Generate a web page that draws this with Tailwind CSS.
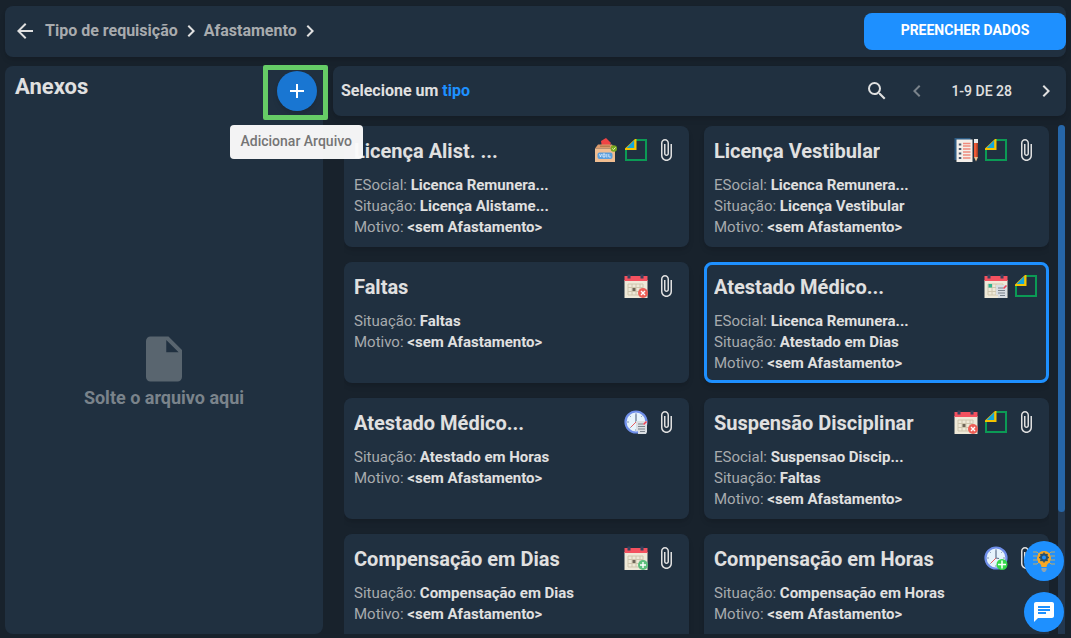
<!DOCTYPE html>
<html lang="pt-BR">
<head>
<meta charset="utf-8">
<meta name="viewport" content="width=device-width, initial-scale=1">
<title>Tipo de requisição - Afastamento</title>
<script src="https://cdn.jsdelivr.net/npm/@tailwindcss/browser@4"></script>
</head>
<body class="relative flex h-screen flex-col gap-[9px] overflow-hidden bg-[#18222c] px-[5px] pt-1.5 pb-1 font-[Roboto,sans-serif] text-[#e0e0e0]">

<svg class="hidden" aria-hidden="true">
  <symbol id="clip" viewBox="0 0 24 24"><path fill="#e0e0e0" d="M16.500 6v11.500c0 2.210-1.790 4-4 4s-4-1.790-4-4V5c0-1.380 1.120-2.500 2.500-2.500s2.500 1.120 2.500 2.500v10.500c0 .55-.45 1-1 1s-1-.45-1-1V6H10v9.500c0 1.380 1.120 2.500 2.500 2.500s2.500-1.120 2.500-2.500V5c0-2.210-1.790-4-4-4S7 2.790 7 5v12.500c0 3.040 2.460 5.500 5.500 5.500s5.500-2.460 5.500-5.500V6z"/></symbol>
  <symbol id="esocial" viewBox="0 0 24 24"><path fill="none" stroke="#0b9a55" stroke-width="2" d="M12 2h10v20H2V12"/><path fill="#f5c400" d="M11 1h1.500v11H1v-1.500z"/><path fill="#12a5dc" d="M10.200 2.200v7.800H2.600z"/></symbol>
  <symbol id="calendar" viewBox="0 0 24 24"><path fill="#efe9d8" d="M.5 6h23v18H.5z"/><path fill="#f4515f" d="M.5 2h23v5H.5z"/><path fill="#37415c" d="M3.500.6h3v3.800h-3zM16.500.6h3v3.800h-3z"/></symbol>
  <symbol id="calendar-grid" viewBox="0 0 24 24"><use href="#calendar"/><path fill="none" stroke="#cfc6ae" d="M4 10h15v11H4zM4 13.500h15M4 17.500h15M8 10v11M12 10v11M16 10v11"/><path fill="#6e6557" d="M8.500 14h3v3h-3z"/></symbol>
  <symbol id="calendar-x" viewBox="0 0 24 24"><use href="#calendar-grid"/><circle cx="19" cy="19" r="5" fill="#ee5f57"/><path stroke="#fff" stroke-width="1.400" d="m17 17 4 4m0-4-4 4"/></symbol>
  <symbol id="calendar-plus" viewBox="0 0 24 24"><use href="#calendar-grid"/><circle cx="19" cy="19" r="5" fill="#5cbf7d"/><path stroke="#fff" stroke-width="1.400" d="M19 16v6m-3-3h6"/></symbol>
  <symbol id="note" viewBox="0 0 24 24"><path fill="#d9dde2" d="M12 11h11v11l-1 2H14v-3h-2z"/><path stroke="#7a828c" d="M14 14h5M14 16.500h7M14 19h7M16 21.500h5"/><path stroke="#ef4056" stroke-width="1.600" d="m19.500 14.500 3-3"/></symbol>
  <symbol id="calendar-note" viewBox="0 0 24 24"><use href="#calendar"/><path fill="none" stroke="#cfc6ae" d="M4 10h15v11H4zM4 13.500h15M4 17.500h15M8 10v11M12 10v11"/><path fill="#2db38e" d="M4.500 10h3.500v3.500H4.500z"/><use href="#note"/></symbol>
  <symbol id="clock" viewBox="0 0 24 24"><circle cx="12" cy="12" r="10.500" fill="#e6f3fc" stroke="#6f8fea" stroke-width="2.200"/><path stroke="#8297b4" d="M12 3v2M12 19v2M3 12h2M19 12h2M5.600 5.600l1.200 1.200M17.200 6.800l1.200-1.200M5.600 18.400l1.200-1.200"/><path fill="none" stroke="#5c6f8a" stroke-width="1.200" d="M12 4.500V12l3 .5"/><path stroke="#e85c5c" d="m12 12-5 5"/></symbol>
  <symbol id="clock-note" viewBox="0 0 24 24"><use href="#clock"/><use href="#note"/></symbol>
  <symbol id="clock-plus" viewBox="0 0 24 24"><use href="#clock"/><circle cx="18" cy="18.500" r="5.500" fill="#35d84b"/><path stroke="#fff" stroke-width="1.500" d="M18 14.500v8m-4-4h8"/></symbol>
  <symbol id="ballot" viewBox="0 0 24 24"><path fill="#ef4444" d="m7 3 5-3 5 5-3 5H8z"/><path fill="#d99a6c" d="m4 6.500-3 4h20l-3-4z"/><path fill="#b97a4f" d="M6 7.500h10v1.500H6z"/><path fill="#f0bd90" d="M1 10.500h20V24H1z"/><rect x="3.500" y="14.500" width="15" height="6.500" rx="2" fill="#5b9fdc"/><path fill="none" stroke="#e6f3ff" stroke-width=".8" d="m5.500 16 1 3 1-3M9 16v3h2v-3H9M12.800 19.500V16M14.800 16v3h2"/><circle cx="19.800" cy="10.500" r="3.200" fill="#79a91f"/><path fill="none" stroke="#e8f5c8" d="m18.300 10.500 1.200 1.200 2-2.300"/></symbol>
  <symbol id="exam" viewBox="0 0 24 24"><path fill="#2c5b84" d="M.5 0h16v22H.5z"/><path fill="#f3eee9" d="M2.500 1.500h16V24h-16z"/><path stroke="#48566c" stroke-width="2" d="M4.800 6.500h2.500M4.800 11h2.500M4.800 15.500h2.500M4.800 20h2.500"/><path stroke="#f08a7c" stroke-width="1.600" d="M9 5.500h7.500M9 8h7.500M9 11h7.500M9 14h7.500M9 17h7.500M9 20h7.500"/><path fill="#e6e8e9" d="M20 1h4v4h-4z"/><path fill="#ef5a35" d="M20 5h4v14h-4z"/><path fill="#a93f29" d="M22.500 5H24v14h-1.500z"/><path fill="#f0c391" d="M20 19h4l-2 4.500z"/></symbol>
</svg>

<header class="flex h-[51px] shrink-0 items-center justify-between rounded-lg bg-[#203040] pl-2 shadow-md">
  <nav aria-label="Navegação" class="flex items-center gap-px pb-0.5 text-base font-bold text-[#a8abae]">
    <button type="button" aria-label="Voltar" class="mr-[7px]"><svg class="size-6" viewBox="0 0 24 24" fill="#e0e0e0"><path d="M20 11H7.830l5.590-5.590L12 4l-8 8 8 8 1.410-1.410L7.830 13H20z"/></svg></button>
    <a href="#tipos">Tipo de requisição</a>
    <svg class="size-6" viewBox="0 0 24 24" fill="#e0e0e0" aria-hidden="true"><path d="M10 6 8.590 7.410 13.170 12l-4.580 4.590L10 18l6-6z"/></svg>
    <a href="#afastamento">Afastamento</a>
    <svg class="size-6" viewBox="0 0 24 24" fill="#e0e0e0" aria-hidden="true"><path d="M10 6 8.590 7.410 13.170 12l-4.580 4.590L10 18l6-6z"/></svg>
  </nav>
  <button type="button" class="h-[37px] w-[202px] rounded-lg bg-[#1e90ff] pb-1 text-sm font-bold text-white">PREENCHER DADOS</button>
</header>

<main class="flex min-h-0 flex-1 gap-2.5">
  <aside class="relative flex w-[318px] shrink-0 flex-col rounded-lg bg-[#203040]">
    <div class="flex items-start justify-between pt-[5px] pr-1.5 pl-2.5">
      <h1 class="text-[22px] leading-8 font-bold">Anexos</h1>
      <button type="button" aria-label="Adicionar Arquivo" aria-describedby="tip" class="grid size-10 place-items-center rounded-full bg-[#1976d2] shadow-md"><svg class="size-6" viewBox="0 0 24 24" fill="#fff"><path d="M19 13h-6v6h-2v-6H5v-2h6V5h2v6h6z"/></svg></button>
    </div>
    <div class="pointer-events-none absolute -top-px -right-[5px] z-10 h-[55px] w-[65px] rounded-xs border-[5px] border-[#66cc66]"></div>
    <div id="tip" role="tooltip" class="absolute top-[59px] -right-10 z-10 rounded-sm bg-[#fafafa]/97 px-[11px] pt-1.5 pb-2 text-sm font-medium whitespace-nowrap text-[#757575]">Adicionar Arquivo</div>
    <div class="flex flex-1 flex-col items-center justify-center pb-1">
      <svg class="size-[54px]" viewBox="0 0 24 24" fill="#59656f" aria-hidden="true"><path d="M6 2c-1.100 0-2 .9-2 2v16c0 1.100.9 2 2 2h12c1.100 0 2-.9 2-2V8l-6-6zm7 7V3.500L18.500 9z"/></svg>
      <p class="text-lg leading-6 font-bold text-[#7a838b]">Solte o arquivo aqui</p>
    </div>
  </aside>

  <section class="flex min-w-0 flex-1 flex-col gap-[9px]">
    <div class="flex h-[50px] shrink-0 items-center justify-between rounded-lg bg-[#203040] px-2 shadow-md">
      <h2 class="text-base font-bold">Selecione um <span class="text-[#1e90ff]">tipo</span></h2>
      <div class="flex items-center">
        <button type="button" aria-label="Pesquisar" class="mr-4"><svg class="size-6" viewBox="0 0 24 24" fill="#e0e0e0"><path d="M15.500 14h-.79l-.28-.27A6.471 6.471 0 0 0 16 9.500 6.500 6.500 0 1 0 9.500 16c1.610 0 3.090-.59 4.230-1.570l.27.28v.79l5 4.990L20.490 19zm-6 0C7.010 14 5 11.990 5 9.500S7.010 5 9.500 5 14 7.010 14 9.500 11.990 14 9.500 14z"/></svg></button>
        <button type="button" aria-label="Página anterior" disabled class="mr-[22px]"><svg class="size-6" viewBox="0 0 24 24" fill="#7a838b"><path d="M15.410 7.410 14 6l-6 6 6 6 1.410-1.410L10.830 12z"/></svg></button>
        <span class="text-sm font-medium">1-9 DE 28</span>
        <button type="button" aria-label="Próxima página" class="ml-[22px]"><svg class="size-6" viewBox="0 0 24 24" fill="#e0e0e0"><path d="M10 6 8.590 7.410 13.170 12l-4.580 4.590L10 18l6-6z"/></svg></button>
      </div>
    </div>

    <div class="flex min-h-0 flex-1 gap-[9px] pr-px pl-[11px]">
      <div class="grid min-w-0 flex-1 auto-rows-[121px] grid-cols-2 gap-[15px] overflow-hidden pt-px text-[15px] leading-[21px] text-[#a8abae]">

        <button type="button" class="flex flex-col rounded-lg bg-[#203040] pt-3 pr-[11px] pl-2.5 text-left shadow-md">
          <span class="mb-[13px] flex h-6 w-full items-center gap-1.5"><strong class="mr-auto truncate pt-0.5 text-xl text-[#e0e0e0]">Licença Alist. ...</strong><svg class="size-6 shrink-0"><use href="#ballot"/></svg><svg class="size-6 shrink-0"><use href="#esocial"/></svg><svg class="size-6 shrink-0"><use href="#clip"/></svg></span>
          <span class="block">ESocial: <strong class="text-[#e0e0e0]">Licenca Remunera...</strong></span>
          <span class="block">Situação: <strong class="text-[#e0e0e0]">Licença Alistame...</strong></span>
          <span class="block">Motivo: <strong class="text-[#e0e0e0]">&lt;sem Afastamento&gt;</strong></span>
        </button>

        <button type="button" class="flex flex-col rounded-lg bg-[#203040] pt-3 pr-[11px] pl-2.5 text-left shadow-md">
          <span class="mb-[13px] flex h-6 w-full items-center gap-1.5"><strong class="mr-auto truncate pt-0.5 text-xl text-[#e0e0e0]">Licença Vestibular</strong><svg class="size-6 shrink-0"><use href="#exam"/></svg><svg class="size-6 shrink-0"><use href="#esocial"/></svg><svg class="size-6 shrink-0"><use href="#clip"/></svg></span>
          <span class="block">ESocial: <strong class="text-[#e0e0e0]">Licenca Remunera...</strong></span>
          <span class="block">Situação: <strong class="text-[#e0e0e0]">Licença Vestibular</strong></span>
          <span class="block">Motivo: <strong class="text-[#e0e0e0]">&lt;sem Afastamento&gt;</strong></span>
        </button>

        <button type="button" class="flex flex-col rounded-lg bg-[#203040] pt-3 pr-[11px] pl-2.5 text-left shadow-md">
          <span class="mb-[13px] flex h-6 w-full items-center gap-1.5"><strong class="mr-auto truncate pt-0.5 text-xl text-[#e0e0e0]">Faltas</strong><svg class="size-6 shrink-0"><use href="#calendar-x"/></svg><svg class="size-6 shrink-0"><use href="#clip"/></svg></span>
          <span class="block">Situação: <strong class="text-[#e0e0e0]">Faltas</strong></span>
          <span class="block">Motivo: <strong class="text-[#e0e0e0]">&lt;sem Afastamento&gt;</strong></span>
        </button>

        <button type="button" aria-pressed="true" class="flex flex-col rounded-lg bg-[#203040] pt-3 pr-[11px] pl-2.5 text-left shadow-md outline-3 -outline-offset-3 outline-[#1e90ff]">
          <span class="mb-[13px] flex h-6 w-full items-center gap-1.5"><strong class="mr-auto truncate pt-0.5 text-xl text-[#e0e0e0]">Atestado Médico...</strong><svg class="size-6 shrink-0"><use href="#calendar-note"/></svg><svg class="size-6 shrink-0"><use href="#esocial"/></svg></span>
          <span class="block">ESocial: <strong class="text-[#e0e0e0]">Licenca Remunera...</strong></span>
          <span class="block">Situação: <strong class="text-[#e0e0e0]">Atestado em Dias</strong></span>
          <span class="block">Motivo: <strong class="text-[#e0e0e0]">&lt;sem Afastamento&gt;</strong></span>
        </button>

        <button type="button" class="flex flex-col rounded-lg bg-[#203040] pt-3 pr-[11px] pl-2.5 text-left shadow-md">
          <span class="mb-[13px] flex h-6 w-full items-center gap-1.5"><strong class="mr-auto truncate pt-0.5 text-xl text-[#e0e0e0]">Atestado Médico...</strong><svg class="size-6 shrink-0"><use href="#clock-note"/></svg><svg class="size-6 shrink-0"><use href="#clip"/></svg></span>
          <span class="block">Situação: <strong class="text-[#e0e0e0]">Atestado em Horas</strong></span>
          <span class="block">Motivo: <strong class="text-[#e0e0e0]">&lt;sem Afastamento&gt;</strong></span>
        </button>

        <button type="button" class="flex flex-col rounded-lg bg-[#203040] pt-3 pr-[11px] pl-2.5 text-left shadow-md">
          <span class="mb-[13px] flex h-6 w-full items-center gap-1.5"><strong class="mr-auto truncate pt-0.5 text-xl text-[#e0e0e0]">Suspensão Disciplinar</strong><svg class="size-6 shrink-0"><use href="#calendar-x"/></svg><svg class="size-6 shrink-0"><use href="#esocial"/></svg><svg class="size-6 shrink-0"><use href="#clip"/></svg></span>
          <span class="block">ESocial: <strong class="text-[#e0e0e0]">Suspensao Discip...</strong></span>
          <span class="block">Situação: <strong class="text-[#e0e0e0]">Faltas</strong></span>
          <span class="block">Motivo: <strong class="text-[#e0e0e0]">&lt;sem Afastamento&gt;</strong></span>
        </button>

        <button type="button" class="flex flex-col rounded-lg bg-[#203040] pt-3 pr-[11px] pl-2.5 text-left shadow-md">
          <span class="mb-[13px] flex h-6 w-full items-center gap-1.5"><strong class="mr-auto truncate pt-0.5 text-xl text-[#e0e0e0]">Compensação em Dias</strong><svg class="size-6 shrink-0"><use href="#calendar-plus"/></svg><svg class="size-6 shrink-0"><use href="#clip"/></svg></span>
          <span class="block">Situação: <strong class="text-[#e0e0e0]">Compensação em Dias</strong></span>
          <span class="block">Motivo: <strong class="text-[#e0e0e0]">&lt;sem Afastamento&gt;</strong></span>
        </button>

        <button type="button" class="flex flex-col rounded-lg bg-[#203040] pt-3 pr-[11px] pl-2.5 text-left shadow-md">
          <span class="mb-[13px] flex h-6 w-full items-center gap-1.5"><strong class="mr-auto truncate pt-0.5 text-xl text-[#e0e0e0]">Compensação em Horas</strong><svg class="size-6 shrink-0"><use href="#clock-plus"/></svg><svg class="size-6 shrink-0"><use href="#clip"/></svg></span>
          <span class="block">Situação: <strong class="text-[#e0e0e0]">Compensação em Horas</strong></span>
          <span class="block">Motivo: <strong class="text-[#e0e0e0]">&lt;sem Afastamento&gt;</strong></span>
        </button>
      </div>
      <div class="w-[7px] shrink-0 rounded-t bg-[#22374f]"><div class="h-[76%] rounded bg-[#2666a8]"></div></div>
    </div>
  </section>
</main>

<div class="absolute right-[7px] bottom-1.5 flex flex-col gap-[11px]">
  <button type="button" aria-label="Dicas" class="grid size-10 place-items-center rounded-full bg-[#1e90ff]">
    <svg class="size-6" viewBox="0 0 24 24" fill="none"><path stroke="#bcab6a" d="M1 3h4l2 2M1 7h4M1 11h4M1 15h4l2-2M23 3h-4l-2 2M23 7h-4M23 11h-4M23 15h-4l-2-2"/><path fill="#f9a825" d="M12 2a7 7 0 0 0-4 12.700c1 .8 1.400 2 1.400 3.300h5.200c0-1.300.4-2.500 1.400-3.300A7 7 0 0 0 12 2z"/><circle cx="12" cy="8.500" r="3" fill="#1e90ff" stroke="#28506f" stroke-width="2"/><path stroke="#28506f" stroke-width="1.500" d="M12 3.500v2M12 11.500v2M7 8.500h2M15 8.500h2M8.500 5l1.300 1.300M14.200 10.700l1.300 1.300M15.500 5l-1.300 1.300M9.800 10.700 8.500 12"/><path fill="#8fa3b0" d="M9.500 19h5v2l-1.500 2h-2l-1.500-2z"/></svg>
  </button>
  <button type="button" aria-label="Chat" class="grid size-10 place-items-center rounded-full bg-[#1e90ff]">
    <svg class="size-6" viewBox="0 0 24 24" fill="#fff"><path d="M20 2H4c-1.100 0-1.990.9-1.990 2L2 22l4-4h14c1.100 0 2-.9 2-2V4c0-1.100-.9-2-2-2zM6 9h12v2H6zm8 5H6v-2h8zm4-6H6V6h12z"/></svg>
  </button>
</div>
</body>
</html>
